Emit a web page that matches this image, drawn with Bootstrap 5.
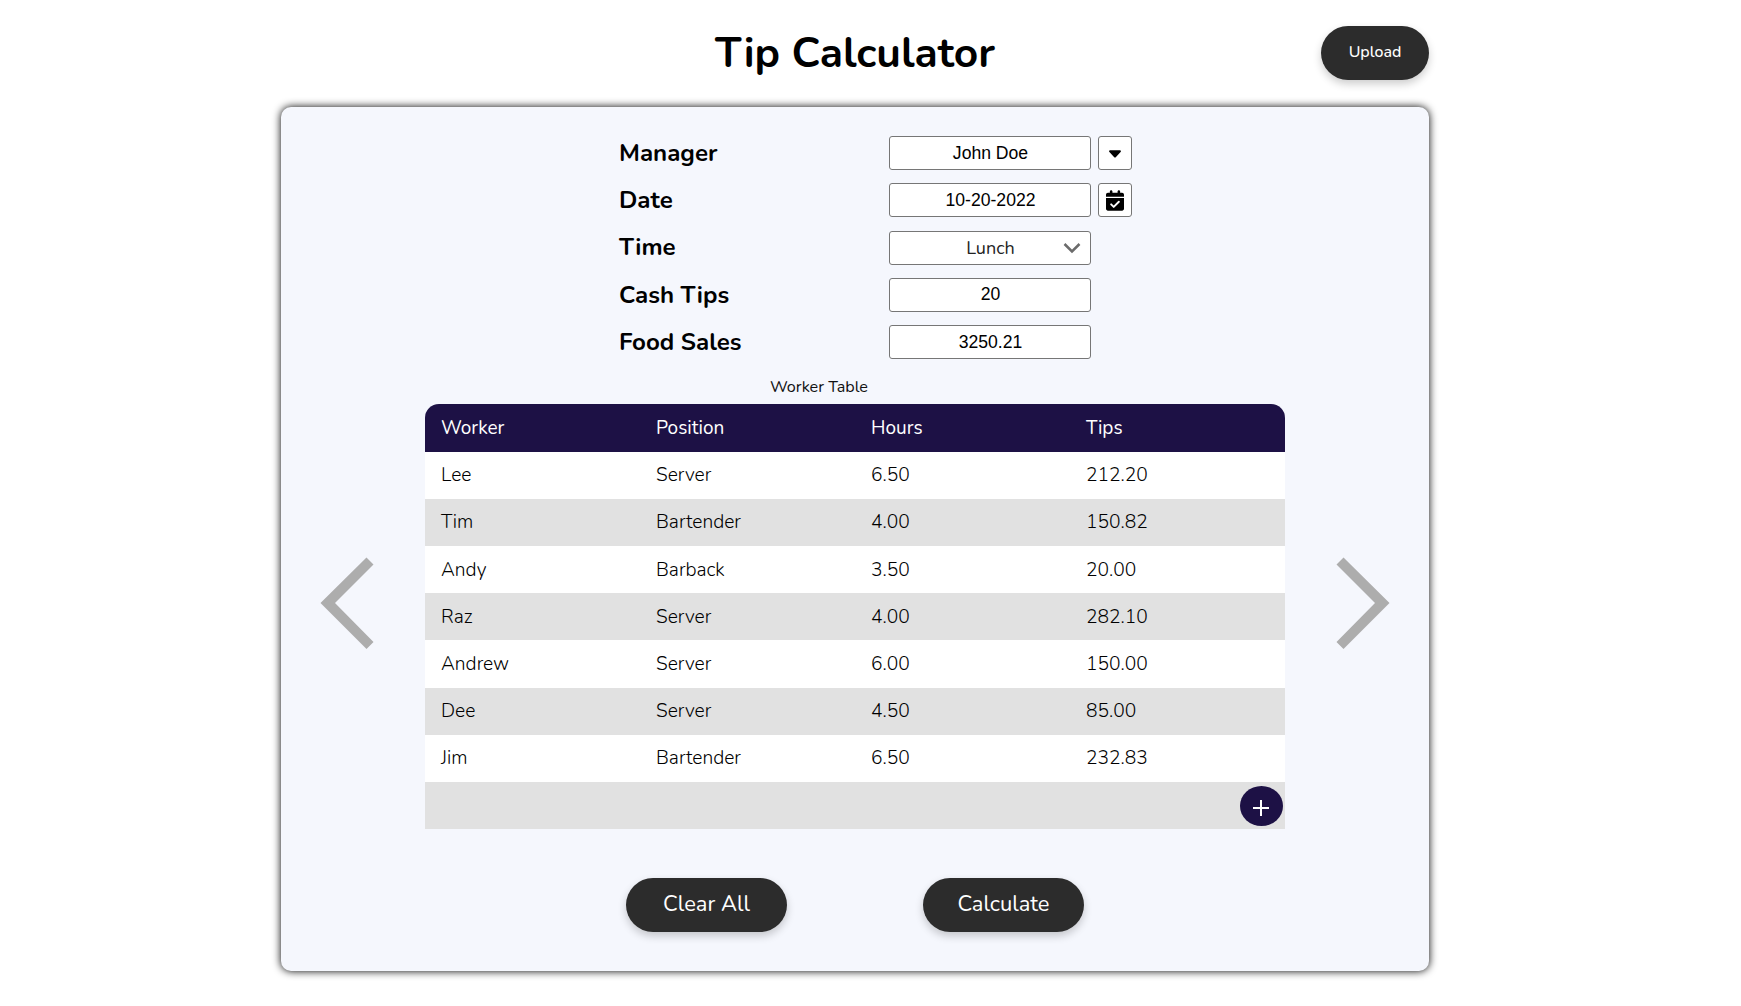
<!DOCTYPE html>
<html lang="en">
<head>
<meta charset="utf-8">
<meta name="viewport" content="width=device-width, initial-scale=1">
<title>Tip Calculator</title>
<link rel="stylesheet" href="https://cdn.jsdelivr.net/npm/bootstrap@5.3.0/dist/css/bootstrap.min.css">
<style>
  body { font-family: Nunito, Lato, sans-serif; color: #000; background: #fff; padding-right: 31px; min-height: 100vh; }
  .app-shell { width: 1148px; padding-bottom: 34px; }
  .app-header { height: 107px; padding-top: 26px; }
  .app-title { font-size: 42.5px; font-weight: 700; line-height: 52px; margin: 1px 0 0; }
  .pill { --bs-btn-color: #fff; --bs-btn-bg: #2c2c2c; --bs-btn-hover-color: #fff; --bs-btn-hover-bg: #444; --bs-btn-border-width: 0;
    height: 54px; padding: 0 0 2px; box-shadow: 0 4px 8px rgba(0,0,0,.2); }
  .pill-upload { width: 108px; font-size: 16px; font-weight: 500; right: 0; }
  .pill-main { width: 161px; font-size: 21.9px; padding-bottom: 2px; }
  .panel { height: 864px; background: #f5f7fd; border-radius: 10px; box-shadow: 0 0 8px #000; padding-top: 22.7px; }
  .entry-form { width: 513px; margin-left: 338px; }
  .entry-row { height: 47.2px; }
  .entry-label { width: 270px; font-size: 24.1px; font-weight: 700; line-height: 30px; padding-top: 1.6px; }
  .field { width: 202px; height: 34px; border: 1px solid #767676; border-radius: 3px; background: #fff; color: #000;
    font: 17.6px "Liberation Sans", Arial, sans-serif; text-align: center; padding: 0 0 0 1px; }
  select.field { font: 400 18px Nunito, Lato, sans-serif; appearance: none; color: #222; }
  .field-arrow { right: 10px; top: 9px; pointer-events: none; }
  .side-btn { width: 34px; height: 34px; border: 1px solid #767676; border-radius: 3px; background: #fff; margin-left: 7px; padding: 0; }
  .side-btn .caret-icon { margin-top: 2px; }
  .workers { width: 860px; margin: 0 0 0 144px; table-layout: fixed; border-collapse: separate; border-spacing: 0;
    --bs-table-color: #000; font-size: 19.2px; font-weight: 300; color: #000; }
  .workers caption { height: 38.7px; padding: 9px 72px 0 0; font-size: 16.2px; font-weight: 400; line-height: 24px; color: #111; text-align: center; }
  .workers > :not(caption) > * > * { height: 47.22px; padding: 0 16px; line-height: 26px; border: 0; box-shadow: none; vertical-align: middle; background: #fff; }
  .workers > thead > tr > th { background: #1d1145; color: #fff; font-weight: 400; font-size: 19px; }
  .workers > thead th:first-child { border-top-left-radius: 14px; }
  .workers > thead th:last-child { border-top-right-radius: 14px; }
  .workers > tbody > tr:nth-child(even) > td { background: #e1e1e1; }
  .workers > tbody > tr > td.add-cell { padding: 0 2px 0 0; }
  .add-btn { width: 43px; height: 40px; border: 0; border-radius: 50%; background: #1d1145; padding: 0 1px 0 0; }
  .add-btn svg { margin-top: 4px; }
  .actions { gap: 136px; padding: 49px 0 0 345px; }
  .chev { top: 449.5px; }
  .chev-prev { left: 39px; }
  .chev-next { right: 39.5px; }
</style>
<script src="https://cdn.jsdelivr.net/npm/bootstrap@5.3.0/dist/js/bootstrap.bundle.min.js"></script>
</head>
<body>
<main class="app-shell mx-auto">
  <header class="app-header position-relative d-flex justify-content-center">
    <h1 class="app-title">Tip Calculator</h1>
    <button class="btn rounded-pill pill pill-upload position-absolute" type="button">Upload</button>
  </header>

  <section class="panel position-relative">
    <form class="entry-form">
      <div class="entry-row d-flex align-items-center">
        <label class="entry-label" for="manager">Manager</label>
        <input class="field" id="manager" value="John Doe">
        <button class="side-btn d-flex align-items-center justify-content-center" type="button" aria-label="Choose manager">
          <svg class="caret-icon" width="14" height="10" viewBox="0 0 14 10"><path d="M2 1.300H12a.9.9 0 0 1 .6 1.600L8 7.900a1.400 1.400 0 0 1-2 0L1.400 2.900A.9.9 0 0 1 2 1.300z"/></svg>
        </button>
      </div>
      <div class="entry-row d-flex align-items-center">
        <label class="entry-label" for="date">Date</label>
        <input class="field" id="date" value="10-20-2022">
        <button class="side-btn d-flex align-items-center justify-content-center" type="button" aria-label="Choose date">
          <svg width="18" height="21" viewBox="0 0 448 512"><path d="M128 0c17.700 0 32 14.300 32 32v32h128V32c0-17.700 14.300-32 32-32s32 14.300 32 32v32h48c26.500 0 48 21.500 48 48v48H0v-48c0-26.500 21.500-48 48-48h48V32c0-17.700 14.300-32 32-32zM0 192h448v272c0 26.500-21.500 48-48 48H48c-26.500 0-48-21.500-48-48z"/><path d="M128 353l64 63 128-128" fill="none" stroke="#fff" stroke-width="48" stroke-linecap="round" stroke-linejoin="round"/></svg>
        </button>
      </div>
      <div class="entry-row d-flex align-items-center">
        <label class="entry-label" for="time">Time</label>
        <div class="position-relative d-flex">
          <select class="field" id="time"><option>Lunch</option><option>Dinner</option></select>
          <svg class="field-arrow position-absolute" width="18" height="16" viewBox="0 0 18 16"><path d="M1.500 4l7.500 7.500L16.500 4" fill="none" stroke="#6b6b6b" stroke-width="2.500"/></svg>
        </div>
      </div>
      <div class="entry-row d-flex align-items-center">
        <label class="entry-label" for="cash">Cash Tips</label>
        <input class="field" id="cash" value="20">
      </div>
      <div class="entry-row d-flex align-items-center">
        <label class="entry-label" for="sales">Food Sales</label>
        <input class="field" id="sales" value="3250.21">
      </div>
    </form>

    <table class="table workers caption-top">
      <caption>Worker Table</caption>
      <thead>
        <tr><th>Worker</th><th>Position</th><th>Hours</th><th>Tips</th></tr>
      </thead>
      <tbody>
        <tr><td>Lee</td><td>Server</td><td>6.50</td><td>212.20</td></tr>
        <tr><td>Tim</td><td>Bartender</td><td>4.00</td><td>150.82</td></tr>
        <tr><td>Andy</td><td>Barback</td><td>3.50</td><td>20.00</td></tr>
        <tr><td>Raz</td><td>Server</td><td>4.00</td><td>282.10</td></tr>
        <tr><td>Andrew</td><td>Server</td><td>6.00</td><td>150.00</td></tr>
        <tr><td>Dee</td><td>Server</td><td>4.50</td><td>85.00</td></tr>
        <tr><td>Jim</td><td>Bartender</td><td>6.50</td><td>232.83</td></tr>
        <tr>
          <td colspan="4" class="add-cell">
            <button class="add-btn d-flex align-items-center justify-content-center ms-auto" type="button" aria-label="Add worker">
              <svg width="18" height="18" viewBox="0 0 18 18"><path d="M9 1v16M1 9h16" stroke="#fff" stroke-width="2"/></svg>
            </button>
          </td>
        </tr>
      </tbody>
    </table>

    <div class="actions d-flex">
      <button class="btn rounded-pill pill pill-main" type="button">Clear All</button>
      <button class="btn rounded-pill pill pill-main" type="button">Calculate</button>
    </div>

    <svg class="chev chev-prev position-absolute" width="54" height="92" viewBox="0 0 54 92" role="img" aria-label="Previous"><path d="M46.500 .5L.5 46l46 46 7-7L15 46 53.500 7.500z" fill="#adadad"/></svg>
    <svg class="chev chev-next position-absolute" width="54" height="92" viewBox="0 0 54 92" role="img" aria-label="Next"><path d="M7.500 .5L53.500 46l-46 46-7-7L39 46 .5 7.500z" fill="#adadad"/></svg>
  </section>
</main>
</body>
</html>
